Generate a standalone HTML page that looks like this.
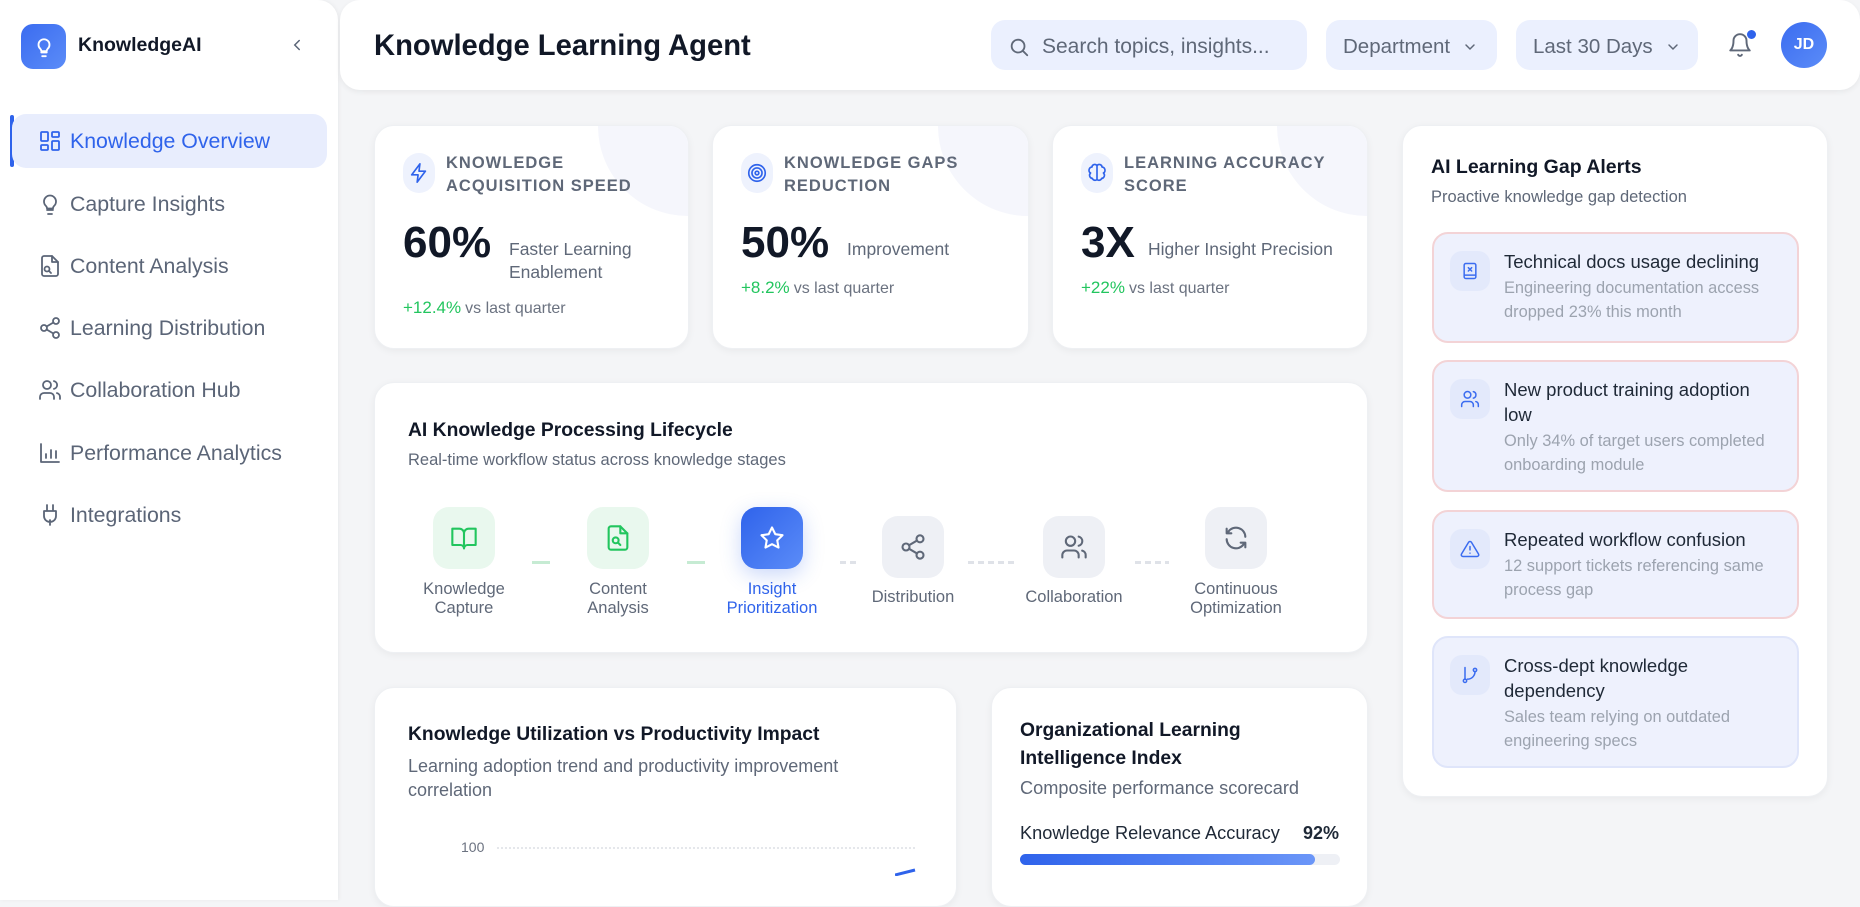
<!DOCTYPE html>
<html><head><meta charset="utf-8"><style>
*{box-sizing:border-box;margin:0;padding:0}
body{width:1860px;height:876px;overflow:hidden;background:#f4f5f7;font-family:"Liberation Sans",sans-serif;color:#111827;position:relative}
.abs{position:absolute}
.sidebar{left:0;top:0;width:338px;height:900px;background:#fff;border-radius:0 20px 0 0;box-shadow:1px 0 4px rgba(0,0,0,.05)}
.nav{position:absolute;left:12px;width:315px;height:54px;display:flex;align-items:center;font-size:21.3px;color:#5b6577;border-radius:14px}
.nav svg{position:absolute;left:26px;width:24px;height:24px;fill:none;stroke:#5b6577;stroke-width:1.8;stroke-linecap:round;stroke-linejoin:round}
.nav span{position:absolute;left:58px}
.nav.active{background:#e8edfd;color:#2f63eb}
.nav.active svg{stroke:#2f63eb}
.card{position:absolute;background:#fff;border-radius:20px;box-shadow:0 2px 8px rgba(0,0,0,.05);overflow:hidden;border:1px solid #eef0f3}
.kpi .circ{position:absolute;right:-90px;top:-90px;width:180px;height:180px;border-radius:50%;background:#f5f6fc}
.kpi .ic{position:absolute;left:28px;top:27px;width:32px;height:40px;border-radius:16px;background:#eef2fd;display:flex;align-items:center;justify-content:center}
.kpi .ic svg{width:22px;height:22px;fill:none;stroke:#2f63eb;stroke-width:1.8;stroke-linecap:round;stroke-linejoin:round}
.kpi .lab{position:absolute;left:71px;top:26px;font-size:16.5px;font-weight:600;letter-spacing:1px;color:#5f6878;line-height:23px;text-transform:uppercase}
.kpi .val{position:absolute;left:28px;font-size:44px;font-weight:700;color:#111827;line-height:50px}
.kpi .sub{position:absolute;font-size:17.5px;color:#5f6878;line-height:23px}
.kpi .ch{position:absolute;left:28px;font-size:16px;color:#6b7280}
.kpi .ch b{color:#22c55e;font-weight:400;font-size:17px;margin-right:4px}
.ctl{position:absolute;top:20px;height:50px;background:#ebf0fe;border-radius:14px;font-size:20.5px;color:#5f6878;display:flex;align-items:center;padding-top:3px}
.stage{position:absolute;width:62px;height:62px;border-radius:16px;display:flex;align-items:center;justify-content:center}
.stage svg{width:28px;height:28px;fill:none;stroke-width:1.8;stroke-linecap:round;stroke-linejoin:round}
.slab{position:absolute;width:180px;text-align:center;font-size:16.5px;line-height:19px;color:#5f6878}
.conn{position:absolute;height:3px}
.alert{position:absolute;left:29px;width:367px;border-radius:16px;background:#eef1fd;border:2px solid #f3d3d6}
.alert .ai{position:absolute;left:16px;top:17px;width:40px;height:40px;border-radius:12px;background:#e3e9fb;display:flex;align-items:center;justify-content:center}
.alert .ai svg{width:20px;height:20px;fill:none;stroke:#3b6cf0;stroke-width:1.8;stroke-linecap:round;stroke-linejoin:round}
.alert .t{position:absolute;left:70px;top:15px;width:275px;font-size:18.5px;color:#1f2937;line-height:25px}
.alert .d{font-size:16.4px;color:#9ca3af;line-height:24px;margin-top:2px}
</style></head><body>

<div class="abs sidebar">
  <div class="abs" style="left:21px;top:24px;width:45px;height:45px;border-radius:12px;background:linear-gradient(135deg,#3b6cf0,#5b8cf8);display:flex;align-items:center;justify-content:center">
    <svg width="22" height="22" viewBox="0 0 24 24" fill="none" stroke="#fff" stroke-width="2" stroke-linecap="round" stroke-linejoin="round"><path d="M9 18h6M10 22h4M8 14a6 6 0 1 1 8 0c-.8.8-1 1.5-1 2.5h-6c0-1-.2-1.7-1-2.5z"/></svg>
  </div>
  <div class="abs" style="left:78px;top:34px;font-size:19.5px;font-weight:700;color:#111827">KnowledgeAI</div>
  <svg class="abs" style="left:288px;top:36px" width="18" height="18" viewBox="0 0 24 24" fill="none" stroke="#5b6577" stroke-width="2" stroke-linecap="round"><path d="M15 6l-6 6 6 6"/></svg>
  <div class="abs" style="left:10px;top:115px;width:4px;height:52px;background:#2f63eb;border-radius:2px"></div>
  <div class="nav active" style="top:114px"><svg viewBox="0 0 24 24"><rect x="3" y="3" width="7" height="9" rx="1"/><rect x="14" y="3" width="7" height="5" rx="1"/><rect x="14" y="12" width="7" height="9" rx="1"/><rect x="3" y="16" width="7" height="5" rx="1"/></svg><span>Knowledge Overview</span></div>
  <div class="nav" style="top:177px"><svg viewBox="0 0 24 24"><path d="M9 18h6M10 22h4M8 14a6 6 0 1 1 8 0c-.8.8-1 1.5-1 2.5h-6c0-1-.2-1.7-1-2.5z"/></svg><span>Capture Insights</span></div>
  <div class="nav" style="top:239px"><svg viewBox="0 0 24 24"><path d="M14 2H6a2 2 0 0 0-2 2v16a2 2 0 0 0 2 2h12a2 2 0 0 0 2-2V8z"/><path d="M14 2v6h6"/><circle cx="9" cy="15" r="2.5"/><path d="M11 17l2 2"/></svg><span>Content Analysis</span></div>
  <div class="nav" style="top:301px"><svg viewBox="0 0 24 24"><circle cx="18" cy="5" r="3"/><circle cx="6" cy="12" r="3"/><circle cx="18" cy="19" r="3"/><path d="M8.6 13.5l6.8 4M15.4 6.5l-6.8 4"/></svg><span>Learning Distribution</span></div>
  <div class="nav" style="top:363px"><svg viewBox="0 0 24 24"><circle cx="9" cy="7" r="4"/><path d="M2 21v-2a4 4 0 0 1 4-4h6a4 4 0 0 1 4 4v2M16 3.1a4 4 0 0 1 0 7.8M22 21v-2a4 4 0 0 0-3-3.9"/></svg><span>Collaboration Hub</span></div>
  <div class="nav" style="top:426px"><svg viewBox="0 0 24 24"><path d="M3 3v18h18M8 17v-4M13 17V9M18 17v-7"/></svg><span>Performance Analytics</span></div>
  <div class="nav" style="top:488px"><svg viewBox="0 0 24 24"><path d="M12 22v-5M9 8V2M15 8V2M18 8v5a6 6 0 0 1-12 0V8z"/></svg><span>Integrations</span></div>
</div>

<div class="abs" style="left:340px;top:0;width:1520px;height:90px;background:#fff;border-radius:20px;box-shadow:0 2px 6px rgba(0,0,0,.06)"></div>
<div class="abs" style="left:374px;top:30px;font-size:29.2px;font-weight:700;color:#111827">Knowledge Learning Agent</div>
<div class="ctl" style="left:991px;width:316px"><svg style="margin-left:17px" width="22" height="22" viewBox="0 0 24 24" fill="none" stroke="#5f6878" stroke-width="2" stroke-linecap="round"><circle cx="11" cy="11" r="7"/><path d="M21 21l-5-5"/></svg><span style="margin-left:12px;font-size:21px">Search topics, insights...</span></div>
<div class="ctl" style="left:1326px;width:171px"><span style="margin-left:17px">Department</span><svg style="margin-left:12px" width="16" height="16" viewBox="0 0 24 24" fill="none" stroke="#5f6878" stroke-width="2.2" stroke-linecap="round"><path d="M6 9l6 6 6-6"/></svg></div>
<div class="ctl" style="left:1516px;width:182px"><span style="margin-left:17px">Last 30 Days</span><svg style="margin-left:12px" width="16" height="16" viewBox="0 0 24 24" fill="none" stroke="#5f6878" stroke-width="2.2" stroke-linecap="round"><path d="M6 9l6 6 6-6"/></svg></div>
<svg class="abs" style="left:1727px;top:32px" width="26" height="26" viewBox="0 0 24 24" fill="none" stroke="#5f6878" stroke-width="1.8" stroke-linecap="round" stroke-linejoin="round"><path d="M6 8a6 6 0 0 1 12 0c0 7 3 9 3 9H3s3-2 3-9M10.3 21a1.9 1.9 0 0 0 3.4 0"/></svg>
<div class="abs" style="left:1746px;top:29px;width:11px;height:11px;border-radius:50%;background:#2f63eb;border:1.5px solid #fff"></div>
<div class="abs" style="left:1781px;top:22px;width:46px;height:46px;border-radius:50%;background:linear-gradient(135deg,#3b6cf0,#5b8cf8);color:#fff;font-size:16px;font-weight:700;display:flex;align-items:center;justify-content:center">JD</div>

<!-- KPI cards -->
<div class="card kpi" style="left:374px;top:125px;width:315px;height:224px">
  <div class="circ"></div>
  <div class="ic"><svg viewBox="0 0 24 24"><path d="M13 2L4 14h7l-1 8 9-12h-7z"/></svg></div>
  <div class="lab">Knowledge<br>Acquisition Speed</div>
  <div class="val" style="top:92px">60%</div>
  <div class="sub" style="left:134px;top:112px">Faster Learning<br>Enablement</div>
  <div class="ch" style="top:172px"><b>+12.4%</b>vs last quarter</div>
</div>
<div class="card kpi" style="left:712px;top:125px;width:317px;height:224px">
  <div class="circ"></div>
  <div class="ic"><svg viewBox="0 0 24 24"><circle cx="12" cy="12" r="9"/><circle cx="12" cy="12" r="5.5"/><circle cx="12" cy="12" r="2"/></svg></div>
  <div class="lab">Knowledge Gaps<br>Reduction</div>
  <div class="val" style="top:92px">50%</div>
  <div class="sub" style="left:134px;top:112px">Improvement</div>
  <div class="ch" style="top:152px"><b>+8.2%</b>vs last quarter</div>
</div>
<div class="card kpi" style="left:1052px;top:125px;width:316px;height:224px">
  <div class="circ"></div>
  <div class="ic"><svg viewBox="0 0 24 24"><path d="M12 4a3 3 0 0 0-5.5 1.5A3.5 3.5 0 0 0 5 12a3.5 3.5 0 0 0 2 6 3 3 0 0 0 5 1M12 4a3 3 0 0 1 5.5 1.5A3.5 3.5 0 0 1 19 12a3.5 3.5 0 0 1-2 6 3 3 0 0 1-5 1M12 4v15"/></svg></div>
  <div class="lab">Learning Accuracy<br>Score</div>
  <div class="val" style="top:92px">3X</div>
  <div class="sub" style="left:95px;top:112px">Higher Insight Precision</div>
  <div class="ch" style="top:152px"><b>+22%</b>vs last quarter</div>
</div>

<!-- Lifecycle -->
<div class="card" style="left:374px;top:382px;width:994px;height:271px">
  <div class="abs" style="left:33px;top:37px;font-size:19.3px;font-weight:700">AI Knowledge Processing Lifecycle</div>
  <div class="abs" style="left:33px;top:68px;font-size:16.5px;color:#5f6878">Real-time workflow status across knowledge stages</div>
</div>
<div class="stage" style="left:433px;top:507px;background:#e9f8ee"><svg viewBox="0 0 24 24" stroke="#22c55e"><path d="M2 4h6a4 4 0 0 1 4 4v13a3 3 0 0 0-3-3H2zM22 4h-6a4 4 0 0 0-4 4v13a3 3 0 0 1 3-3h7z"/></svg></div>
<div class="stage" style="left:587px;top:507px;background:#e9f8ee"><svg viewBox="0 0 24 24" stroke="#22c55e"><path d="M14 2H6a2 2 0 0 0-2 2v16a2 2 0 0 0 2 2h12a2 2 0 0 0 2-2V8z"/><path d="M14 2v6h6"/><circle cx="10" cy="14" r="2.5"/><path d="M12 16l2 2"/></svg></div>
<div class="stage" style="left:741px;top:507px;background:linear-gradient(135deg,#2f63eb,#5b8cf8);box-shadow:0 6px 20px rgba(47,99,235,.25)"><svg viewBox="0 0 24 24" stroke="#fff"><path d="M12 3l2.8 5.7 6.2.9-4.5 4.4 1.1 6.2L12 17.3l-5.6 2.9 1.1-6.2L3 9.6l6.2-.9z"/></svg></div>
<div class="stage" style="left:882px;top:516px;background:#eef0f5"><svg viewBox="0 0 24 24" stroke="#5f6878"><circle cx="18" cy="5" r="3"/><circle cx="6" cy="12" r="3"/><circle cx="18" cy="19" r="3"/><path d="M8.6 13.5l6.8 4M15.4 6.5l-6.8 4"/></svg></div>
<div class="stage" style="left:1043px;top:516px;background:#eef0f5"><svg viewBox="0 0 24 24" stroke="#5f6878"><circle cx="9" cy="7" r="4"/><path d="M2 21v-2a4 4 0 0 1 4-4h6a4 4 0 0 1 4 4v2M16 3.1a4 4 0 0 1 0 7.8M22 21v-2a4 4 0 0 0-3-3.9"/></svg></div>
<div class="stage" style="left:1205px;top:507px;background:#eef0f5"><svg viewBox="0 0 24 24" stroke="#5f6878"><path d="M20 11a8 8 0 0 0-14.5-4.5M4 4v4h4M4 13a8 8 0 0 0 14.5 4.5M20 20v-4h-4"/></svg></div>
<div class="conn" style="left:532px;top:561px;width:18px;background:#c6ebd3"></div>
<div class="conn" style="left:687px;top:561px;width:18px;background:#c6ebd3"></div>
<div class="conn" style="left:840px;top:561px;width:20px;background:repeating-linear-gradient(90deg,#dfe2e8 0 6px,transparent 6px 10px)"></div>
<div class="conn" style="left:968px;top:561px;width:46px;background:repeating-linear-gradient(90deg,#dfe2e8 0 6px,transparent 6px 10px)"></div>
<div class="conn" style="left:1135px;top:561px;width:34px;background:repeating-linear-gradient(90deg,#dfe2e8 0 6px,transparent 6px 10px)"></div>
<div class="slab" style="left:374px;top:580px">Knowledge<br>Capture</div>
<div class="slab" style="left:528px;top:580px">Content<br>Analysis</div>
<div class="slab" style="left:682px;top:580px;color:#2f63eb">Insight<br>Prioritization</div>
<div class="slab" style="left:823px;top:588px">Distribution</div>
<div class="slab" style="left:984px;top:588px">Collaboration</div>
<div class="slab" style="left:1146px;top:580px">Continuous<br>Optimization</div>

<!-- bottom cards -->
<div class="card" style="left:374px;top:687px;width:583px;height:220px">
  <div class="abs" style="left:33px;top:36px;font-size:19.3px;font-weight:700">Knowledge Utilization vs Productivity Impact</div>
  <div class="abs" style="left:33px;top:66px;width:500px;font-size:18px;color:#5f6878;line-height:24px">Learning adoption trend and productivity improvement correlation</div>
  <div class="abs" style="left:86px;top:151px;font-size:14px;color:#6b7280">100</div>
  <div class="abs" style="left:122px;top:159px;width:418px;border-top:2px dotted #e5e7eb"></div>
  <svg class="abs" style="left:520px;top:178px" width="22" height="10"><path d="M0 9L20 4" stroke="#2f63eb" stroke-width="3"/></svg>
</div>
<div class="card" style="left:991px;top:687px;width:377px;height:220px">
  <div class="abs" style="left:28px;top:29px;font-size:19.3px;font-weight:700;line-height:28px">Organizational Learning<br>Intelligence Index</div>
  <div class="abs" style="left:28px;top:90px;font-size:18.2px;color:#5f6878">Composite performance scorecard</div>
  <div class="abs" style="left:28px;top:135px;font-size:18.2px;color:#1f2937">Knowledge Relevance Accuracy</div>
  <div class="abs" style="right:28px;top:135px;font-size:18px;font-weight:600;color:#1f2937">92%</div>
  <div class="abs" style="left:28px;top:166px;width:320px;height:11px;border-radius:6px;background:#eef0f5"><div style="width:295px;height:11px;border-radius:6px;background:linear-gradient(90deg,#2f63eb,#6b96f8)"></div></div>
</div>

<!-- Alerts -->
<div class="card" style="left:1402px;top:125px;width:426px;height:672px">
  <div class="abs" style="left:28px;top:30px;font-size:19.5px;font-weight:700">AI Learning Gap Alerts</div>
  <div class="abs" style="left:28px;top:62px;font-size:16.5px;color:#5f6878">Proactive knowledge gap detection</div>
  <div class="alert" style="top:106px;height:111px"><div class="ai"><svg viewBox="0 0 24 24"><rect x="5" y="3" width="14" height="18" rx="2"/><path d="M5 17h14M10 8l4 4M14 8l-4 4"/></svg></div><div class="t">Technical docs usage declining<div class="d">Engineering documentation access dropped 23% this month</div></div></div>
  <div class="alert" style="top:234px;height:132px"><div class="ai"><svg viewBox="0 0 24 24"><circle cx="9" cy="7" r="4"/><path d="M2 21v-2a4 4 0 0 1 4-4h6a4 4 0 0 1 4 4v2M16 3.1a4 4 0 0 1 0 7.8M22 21v-2a4 4 0 0 0-3-3.9"/></svg></div><div class="t">New product training adoption low<div class="d">Only 34% of target users completed onboarding module</div></div></div>
  <div class="alert" style="top:384px;height:109px"><div class="ai"><svg viewBox="0 0 24 24"><path d="M10.3 3.9L1.8 18a2 2 0 0 0 1.7 3h17a2 2 0 0 0 1.7-3L13.7 3.9a2 2 0 0 0-3.4 0zM12 9v4M12 17h.01"/></svg></div><div class="t">Repeated workflow confusion<div class="d">12 support tickets referencing same process gap</div></div></div>
  <div class="alert" style="top:510px;height:132px;border-color:#dfe5fa"><div class="ai"><svg viewBox="0 0 24 24"><circle cx="6" cy="19" r="2"/><circle cx="18" cy="6" r="2"/><path d="M6 3v14M18 8a9 9 0 0 1-9 9"/></svg></div><div class="t">Cross-dept knowledge dependency<div class="d">Sales team relying on outdated engineering specs</div></div></div>
</div>
</body></html>
